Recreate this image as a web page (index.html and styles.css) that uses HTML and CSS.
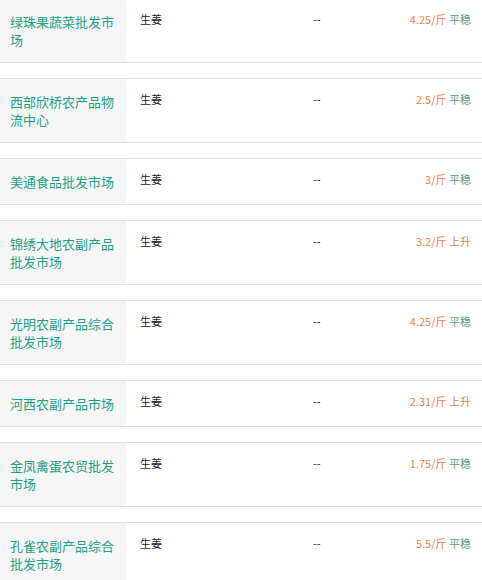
FILE: index.html
```html
<!DOCTYPE html>
<html lang="zh-CN">
<head>
<meta charset="utf-8">
<title>市场行情</title>
<link rel="stylesheet" href="styles.css">
</head>
<body>
<ul class="list">
  <li class="row">
    <div class="name">绿珠果蔬菜批发市场</div>
    <div class="kind">生姜</div>
    <div class="dash">--</div>
    <div class="price"><span class="num">4.25/斤</span> <span class="flat">平稳</span></div>
  </li>
  <li class="row">
    <div class="name">西部欣桥农产品物流中心</div>
    <div class="kind">生姜</div>
    <div class="dash">--</div>
    <div class="price"><span class="num">2.5/斤</span> <span class="flat">平稳</span></div>
  </li>
  <li class="row">
    <div class="name">美通食品批发市场</div>
    <div class="kind">生姜</div>
    <div class="dash">--</div>
    <div class="price"><span class="num">3/斤</span> <span class="flat">平稳</span></div>
  </li>
  <li class="row">
    <div class="name">锦绣大地农副产品批发市场</div>
    <div class="kind">生姜</div>
    <div class="dash">--</div>
    <div class="price"><span class="num">3.2/斤</span> <span class="up">上升</span></div>
  </li>
  <li class="row">
    <div class="name">光明农副产品综合批发市场</div>
    <div class="kind">生姜</div>
    <div class="dash">--</div>
    <div class="price"><span class="num">4.25/斤</span> <span class="flat">平稳</span></div>
  </li>
  <li class="row">
    <div class="name">河西农副产品市场</div>
    <div class="kind">生姜</div>
    <div class="dash">--</div>
    <div class="price"><span class="num">2.31/斤</span> <span class="up">上升</span></div>
  </li>
  <li class="row">
    <div class="name">金凤禽蛋农贸批发市场</div>
    <div class="kind">生姜</div>
    <div class="dash">--</div>
    <div class="price"><span class="num">1.75/斤</span> <span class="flat">平稳</span></div>
  </li>
  <li class="row">
    <div class="name">孔雀农副产品综合批发市场</div>
    <div class="kind">生姜</div>
    <div class="dash">--</div>
    <div class="price"><span class="num">5.5/斤</span> <span class="flat">平稳</span></div>
  </li>
</ul>
</body>
</html>
```

FILE: styles.css
```css
html, body {
  margin: 0;
  padding: 0;
  background: #ffffff;
}

body {
  font-family: "Microsoft YaHei", "Noto Sans CJK SC", "Noto Sans", sans-serif;
  color: #333333;
}

.list {
  list-style: none;
  margin: -2px 0 0 0;
  padding: 0;
  display: flex;
  flex-direction: column;
  gap: 15px;
}

.row {
  display: grid;
  grid-template-columns: 126px 187px 1fr auto;
  border-top: 1px solid #e0e0e0;
  border-bottom: 1px solid #e0e0e0;
  align-items: start;
}

.name {
  align-self: stretch;
  background: #f6f6f6;
  color: #1ea082;
  font-size: 13px;
  line-height: 18px;
  padding: 14px 10px 13px 10px;
}

.kind,
.dash,
.price {
  font-size: 11px;
  line-height: 14px;
  padding-top: 13px;
}

.kind {
  padding-left: 14px;
  color: #222222;
}

.dash {
  color: #222222;
}

.price {
  padding-right: 11px;
  text-align: right;
  white-space: nowrap;
}

.num {
  color: #f07f3c;
}

.flat {
  color: #5a9e7c;
}

.up {
  color: #e8804a;
}
```
